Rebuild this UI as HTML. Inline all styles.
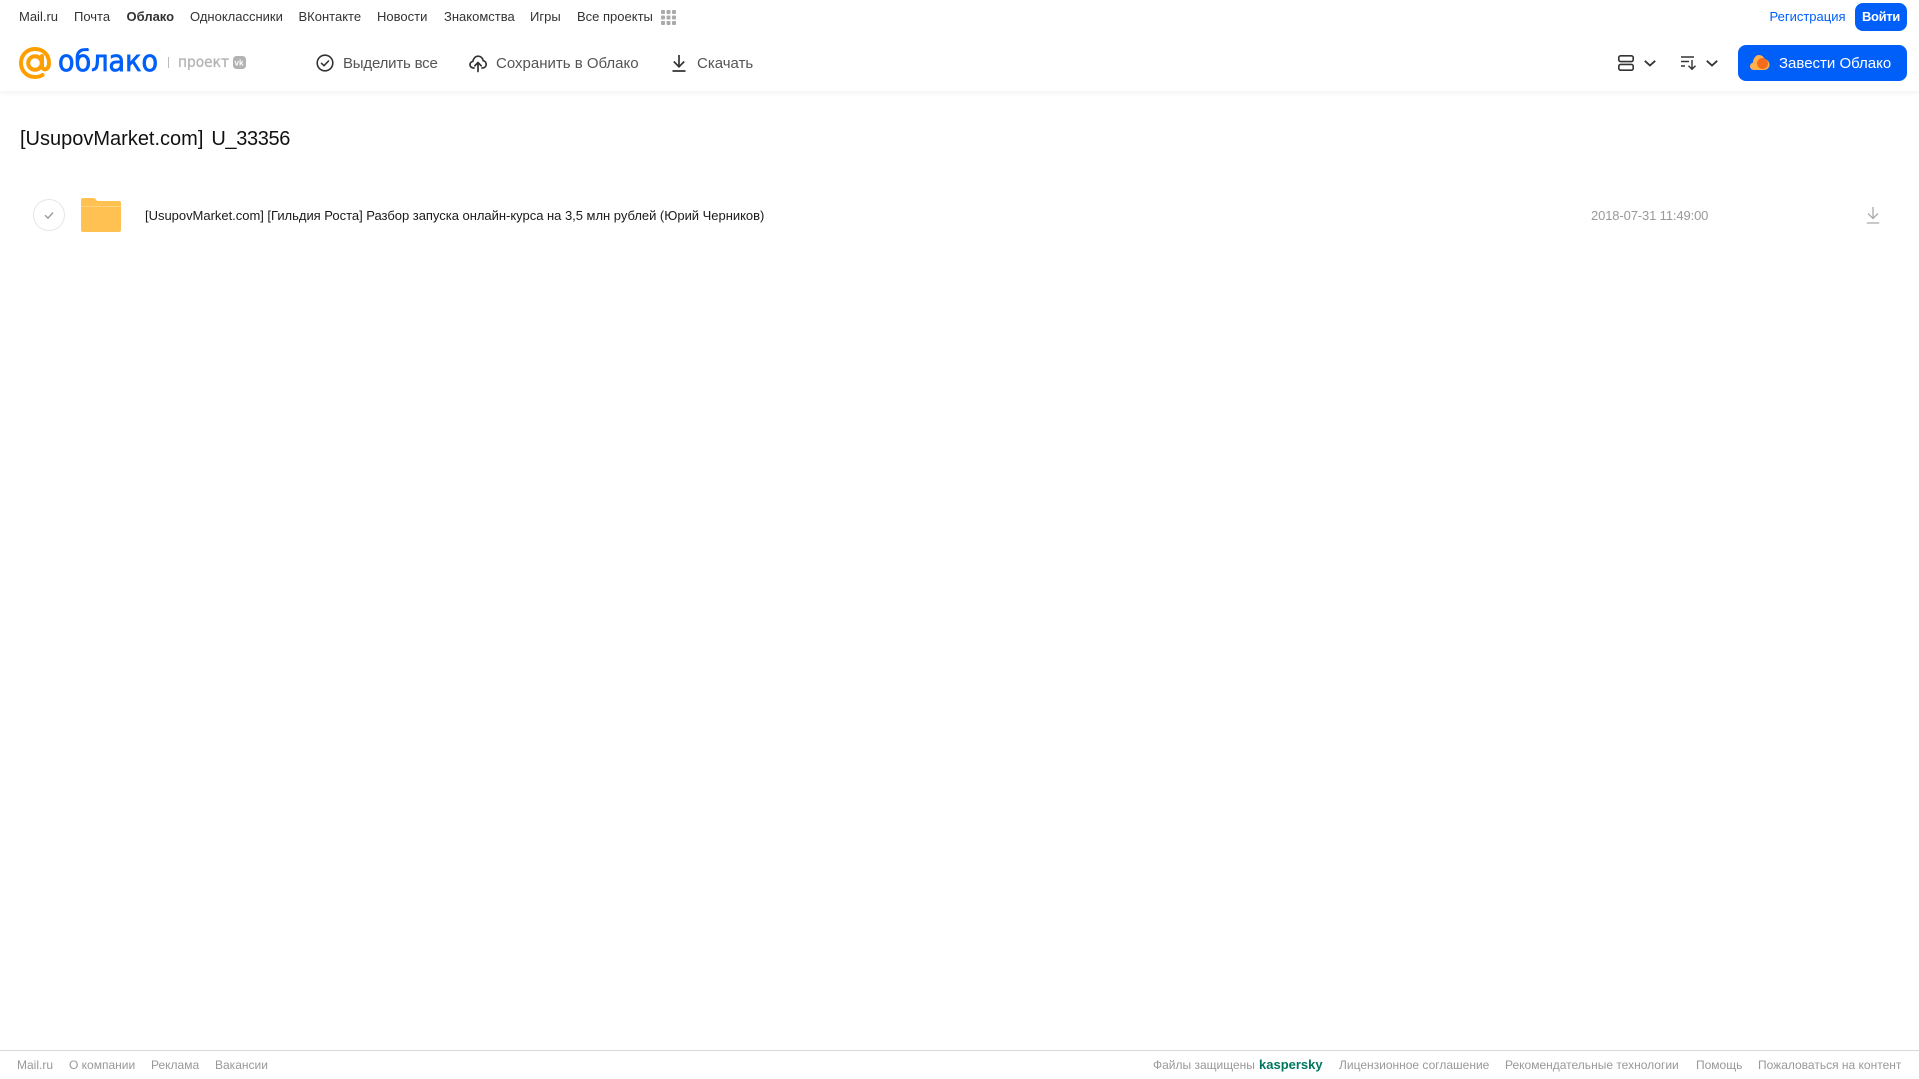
<!DOCTYPE html>
<html lang="ru"><head><meta charset="utf-8"><title>Облако</title>
<style>
html,body{margin:0;padding:0;background:#fff}
body{position:relative;width:1919px;height:1079px;overflow:hidden;font-family:"Liberation Sans",Arial,sans-serif}
.t{position:absolute;white-space:nowrap;line-height:20px;height:20px}
.n{font-size:13px;top:7px;color:#333}
.b{font-size:15px;top:54px;color:#555}
.f{font-size:12px;top:1055px;color:#999}
svg{position:absolute;overflow:visible}
#hd{position:absolute;left:0;top:0;width:1919px;height:91px;background:#fff;box-shadow:0 1px 6px rgba(0,0,0,.07)}
#line{position:absolute;left:0;top:1050px;width:1919px;height:1px;background:#d8d8d8}
.btn{position:absolute;background:#005ff9;border-radius:8px}
</style></head><body>
<div id="hd"></div>
<span class="t n" style="left:19px">Mail.ru</span>
<span class="t n" style="left:74px">Почта</span>
<span class="t n" style="left:126.500px;font-weight:bold">Облако</span>
<span class="t n" style="left:190px">Одноклассники</span>
<span class="t n" style="left:298.500px">ВКонтакте</span>
<span class="t n" style="left:377px">Новости</span>
<span class="t n" style="left:444px">Знакомства</span>
<span class="t n" style="left:530px">Игры</span>
<span class="t n" style="left:577px">Все проекты</span>
<svg style="left:661px;top:10px" width="15" height="15" fill="#aaa"><rect x="0" y="0" width="4" height="4" rx="1"/><rect x="5.500" y="0" width="4" height="4" rx="1"/><rect x="11" y="0" width="4" height="4" rx="1"/><rect x="0" y="5.500" width="4" height="4" rx="1"/><rect x="5.500" y="5.500" width="4" height="4" rx="1"/><rect x="11" y="5.500" width="4" height="4" rx="1"/><rect x="0" y="11" width="4" height="4" rx="1"/><rect x="5.500" y="11" width="4" height="4" rx="1"/><rect x="11" y="11" width="4" height="4" rx="1"/></svg>
<span class="t n" style="left:1769.500px;color:#005ff9">Регистрация</span>
<div class="btn" style="left:1855px;top:3px;width:52px;height:28px"></div>
<span class="t n" style="left:1862px;color:#fff;font-weight:bold;letter-spacing:-.35px">Войти</span>

<svg style="left:19px;top:47px" width="32" height="33" viewBox="0 0 32 33" fill="none" stroke="#ff9e00" stroke-width="4"><circle cx="16" cy="16" r="6.800"/><path d="M23 9v9.500c0 5.500 7 5.500 7-2.500C30 7.500 24 2 16 2 8 2 2 8 2 16s6 14 14 14c3 0 5.500-.7 7.500-2" stroke-linecap="round"/></svg>
<svg style="left:0;top:35px" width="260" height="55"><text x="58" y="36" font-family="DejaVu Sans" font-size="29" fill="#005ff9" stroke="#005ff9" stroke-width=".8" textLength="100" lengthAdjust="spacingAndGlyphs">облако</text><text x="178" y="32" font-family="DejaVu Sans" font-size="15" fill="#b3b3b3" stroke="#b3b3b3" stroke-width=".3" textLength="51" lengthAdjust="spacingAndGlyphs">проект</text><rect x="168" y="22" width="1" height="11" fill="#bbb"/><rect x="233" y="21" width="13" height="13" rx="3.500" fill="#b3b3b3"/><text x="234.500" y="30.500" font-family="Liberation Sans" font-size="8" font-weight="bold" fill="#fff">vk</text></svg>

<svg style="left:316px;top:54px" width="18" height="18" viewBox="0 0 18 18" fill="none" stroke="#333" stroke-width="1.600"><circle cx="9" cy="9" r="7.800"/><path d="M5.500 9.300l2.500 2.400 4.500-4.700" stroke-linecap="round" stroke-linejoin="round"/></svg>
<span class="t b" style="left:343px;letter-spacing:-.2px">Выделить все</span>
<svg style="left:469px;top:55px" width="18" height="17" viewBox="0 0 18 17" fill="none" stroke="#333" stroke-width="1.700"><path d="M5 13H4.500C2.500 13 1 11.500 1 9.700 1 8 2.200 6.700 3.800 6.400 4.300 3.400 6.500 1.200 9.200 1.200c2.600 0 4.600 2 5 4.500C16 6 17.200 7.600 17.200 9.400 17.200 11.400 15.600 13 13.500 13H13" stroke-linecap="round"/><path d="M9 16.500V8M5.800 10.800L9 7.500l3.200 3.300" stroke-linecap="round" stroke-linejoin="round"/></svg>
<span class="t b" style="left:496px">Сохранить в Облако</span>
<svg style="left:672px;top:54px" width="14" height="18" viewBox="0 0 14 18" fill="none" stroke="#333" stroke-width="1.700"><path d="M7 1v11.500M1.800 7.500L7 12.800l5.200-5.300M.5 17h13"/></svg>
<span class="t b" style="left:697px">Скачать</span>

<svg style="left:1618px;top:55px" width="16" height="16" viewBox="0 0 16 16" fill="none" stroke="#333" stroke-width="1.600"><rect x=".8" y=".8" width="14.400" height="5.800" rx="1.800"/><rect x=".8" y="9.400" width="14.400" height="5.800" rx="1.800"/></svg>
<svg style="left:1644px;top:60px" width="12" height="7" fill="none" stroke="#333" stroke-width="1.800"><path d="M.8.800L6 5.500 11.200.800"/></svg>
<svg style="left:1681px;top:56px" width="16" height="14" viewBox="0 0 16 14" fill="none" stroke="#333" stroke-width="1.400"><path d="M0 1h13M0 5.500h8M0 10h4M11 4v9M7.500 9.800l3.500 3.500 3.500-3.500"/></svg>
<svg style="left:1706px;top:60px" width="12" height="7" fill="none" stroke="#333" stroke-width="1.800"><path d="M.8.800L6 5.500 11.200.800"/></svg>
<div class="btn" style="left:1738px;top:45px;width:169px;height:36px"></div>
<svg style="left:1750px;top:54px" width="20" height="17" viewBox="0 0 20 17"><path d="M4 16C1.500 16 0 14.300 0 12.300 0 10.500 1.200 9.200 2.800 8.800 3 5 5.500 1 9 1c2.800 0 4.800 1.800 5.500 4.300C17.500 5.500 19.500 8 19.500 10.800 19.500 14 17 16 14 16z" fill="#ffb14a"/><circle cx="12.500" cy="9.500" r="5.500" fill="#f76b1c"/></svg>
<span class="t b" style="left:1779px;color:#fff">Завести Облако</span>

<span class="t" style="left:20px;top:127px;font-size:20px;line-height:24px;height:24px;color:#111">[UsupovMarket.com] <span style="margin-left:2.400px;letter-spacing:-.35px">U_33356</span></span>

<svg style="left:33px;top:199px" width="32" height="32" fill="none"><circle cx="16" cy="16" r="15.500" stroke="#e6e6e6"/><path d="M12 16.300l3 2.800 5-5.500" stroke="#999" stroke-width="1.400"/></svg>
<svg style="left:81px;top:198px" width="40" height="34" viewBox="0 0 40 34"><path d="M2 0h10c2 0 3 1 4 3h22c1.200 0 2 .8 2 2v27c0 1.200-.8 2-2 2H2c-1.200 0-2-.8-2-2V2C0 .8.800 0 2 0z" fill="#ffc252"/><rect x="0" y="8" width="40" height="1" fill="#ffd27c"/></svg>
<span class="t" style="left:145px;top:206px;font-size:13px;letter-spacing:-.02px;color:#1a1a1a">[UsupovMarket.com] [Гильдия Роста] Разбор запуска онлайн-курса на 3,5 млн рублей (Юрий Черников)</span>
<span class="t" style="left:1591px;top:206px;font-size:13px;letter-spacing:-.13px;color:#999">2018-07-31 11:49:00</span>
<svg style="left:1866px;top:207px" width="14" height="17" viewBox="0 0 14 17" fill="none" stroke="#aaa" stroke-width="1.300"><path d="M7 0v11M2 6.500L7 11.500l5-5M.8 16h12.400"/></svg>

<div id="line"></div>
<span class="t f" style="left:17px">Mail.ru</span>
<span class="t f" style="left:69px">О компании</span>
<span class="t f" style="left:151px">Реклама</span>
<span class="t f" style="left:215px">Вакансии</span>
<span class="t f" style="left:1153px">Файлы защищены</span>
<span class="t f" style="left:1259px;color:#00775f;font-weight:bold;font-size:13px">kaspersky</span>
<span class="t f" style="left:1339px">Лицензионное соглашение</span>
<span class="t f" style="left:1505px">Рекомендательные технологии</span>
<span class="t f" style="left:1696px">Помощь</span>
<span class="t f" style="left:1758px">Пожаловаться на контент</span>
</body></html>
